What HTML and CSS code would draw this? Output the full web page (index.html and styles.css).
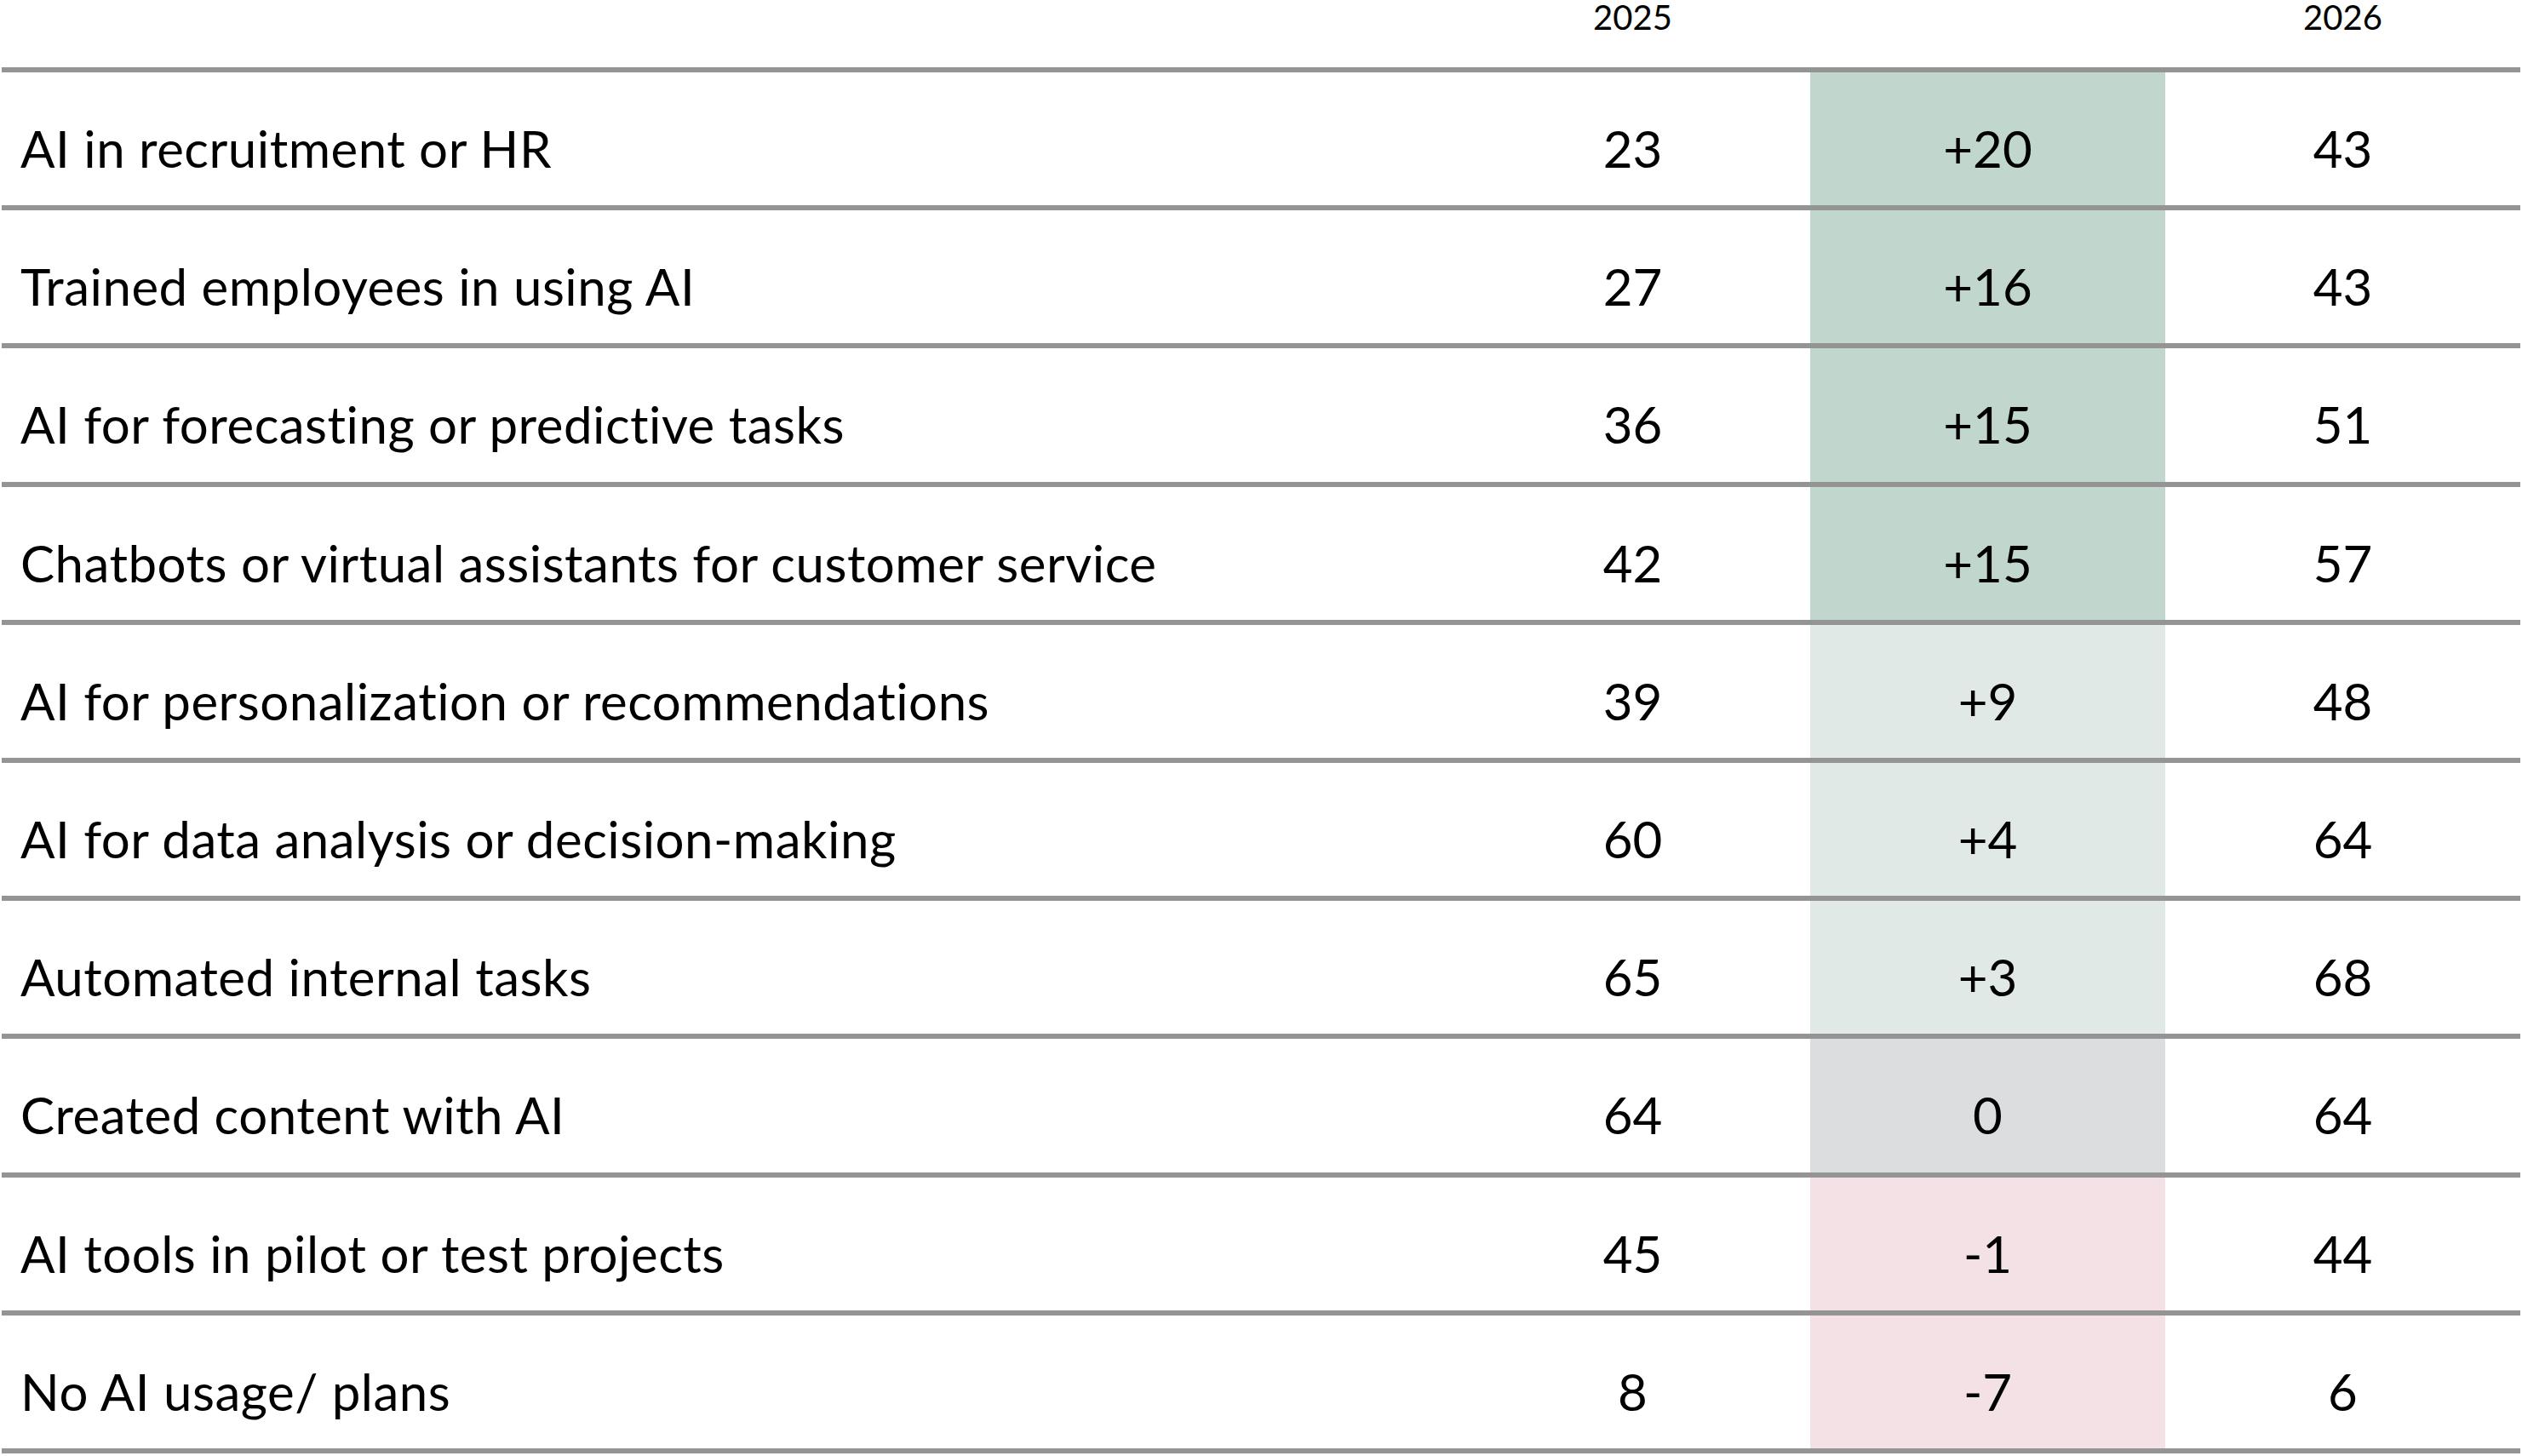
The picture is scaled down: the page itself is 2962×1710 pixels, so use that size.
FILE: index.html
```html
<!DOCTYPE html>
<html lang="en">
<head>
<meta charset="utf-8">
<title>AI usage 2025 vs 2026</title>
<link rel="stylesheet" href="styles.css">
</head>
<body>
<div class="table">
  <div class="row head">
    <div class="cell label"></div>
    <div class="cell num">2025</div>
    <div class="cell num"></div>
    <div class="cell num">2026</div>
  </div>
  <div class="row">
    <div class="cell label">AI in recruitment or HR</div>
    <div class="cell num">23</div>
    <div class="cell num diff strong">+20</div>
    <div class="cell num">43</div>
  </div>
  <div class="row">
    <div class="cell label">Trained employees in using AI</div>
    <div class="cell num">27</div>
    <div class="cell num diff strong">+16</div>
    <div class="cell num">43</div>
  </div>
  <div class="row">
    <div class="cell label">AI for forecasting or predictive tasks</div>
    <div class="cell num">36</div>
    <div class="cell num diff strong">+15</div>
    <div class="cell num">51</div>
  </div>
  <div class="row">
    <div class="cell label">Chatbots or virtual assistants for customer service</div>
    <div class="cell num">42</div>
    <div class="cell num diff strong">+15</div>
    <div class="cell num">57</div>
  </div>
  <div class="row">
    <div class="cell label">AI for personalization or recommendations</div>
    <div class="cell num">39</div>
    <div class="cell num diff light">+9</div>
    <div class="cell num">48</div>
  </div>
  <div class="row">
    <div class="cell label">AI for data analysis or decision-making</div>
    <div class="cell num">60</div>
    <div class="cell num diff light">+4</div>
    <div class="cell num">64</div>
  </div>
  <div class="row">
    <div class="cell label">Automated internal tasks</div>
    <div class="cell num">65</div>
    <div class="cell num diff light">+3</div>
    <div class="cell num">68</div>
  </div>
  <div class="row">
    <div class="cell label">Created content with AI</div>
    <div class="cell num">64</div>
    <div class="cell num diff neutral">0</div>
    <div class="cell num">64</div>
  </div>
  <div class="row">
    <div class="cell label">AI tools in pilot or test projects</div>
    <div class="cell num">45</div>
    <div class="cell num diff negative">-1</div>
    <div class="cell num">44</div>
  </div>
  <div class="row">
    <div class="cell label">No AI usage/ plans</div>
    <div class="cell num">8</div>
    <div class="cell num diff negative">-7</div>
    <div class="cell num">6</div>
  </div>
</div>
</body>
</html>
```

FILE: styles.css
```css
html, body {
  margin: 0;
  padding: 0;
  background: #ffffff;
}

body {
  font-family: "Lato", "Liberation Sans", sans-serif;
  color: #000000;
}

.table {
  width: 2958px;
  margin-left: 2px;
}

.row {
  display: grid;
  grid-template-columns: 1707px 417px 417px 417px;
  height: 156.2px;
  border-bottom: 6px solid #949494;
}

.row.head {
  height: 79px;
}

.cell {
  font-size: 60px;
  line-height: 72px;
  padding-top: 53px;
  box-sizing: border-box;
  white-space: nowrap;
}

.head .cell {
  font-size: 40px;
  line-height: 40px;
  padding-top: 0;
}

.label {
  padding-left: 22px;
  letter-spacing: 0.5px;
}

.num {
  text-align: center;
}

.strong {
  background: #c1d7ce;
}

.light {
  background: #e0e9e6;
}

.neutral {
  background: #dcdddf;
}

.negative {
  background: #f4e1e6;
}
```
